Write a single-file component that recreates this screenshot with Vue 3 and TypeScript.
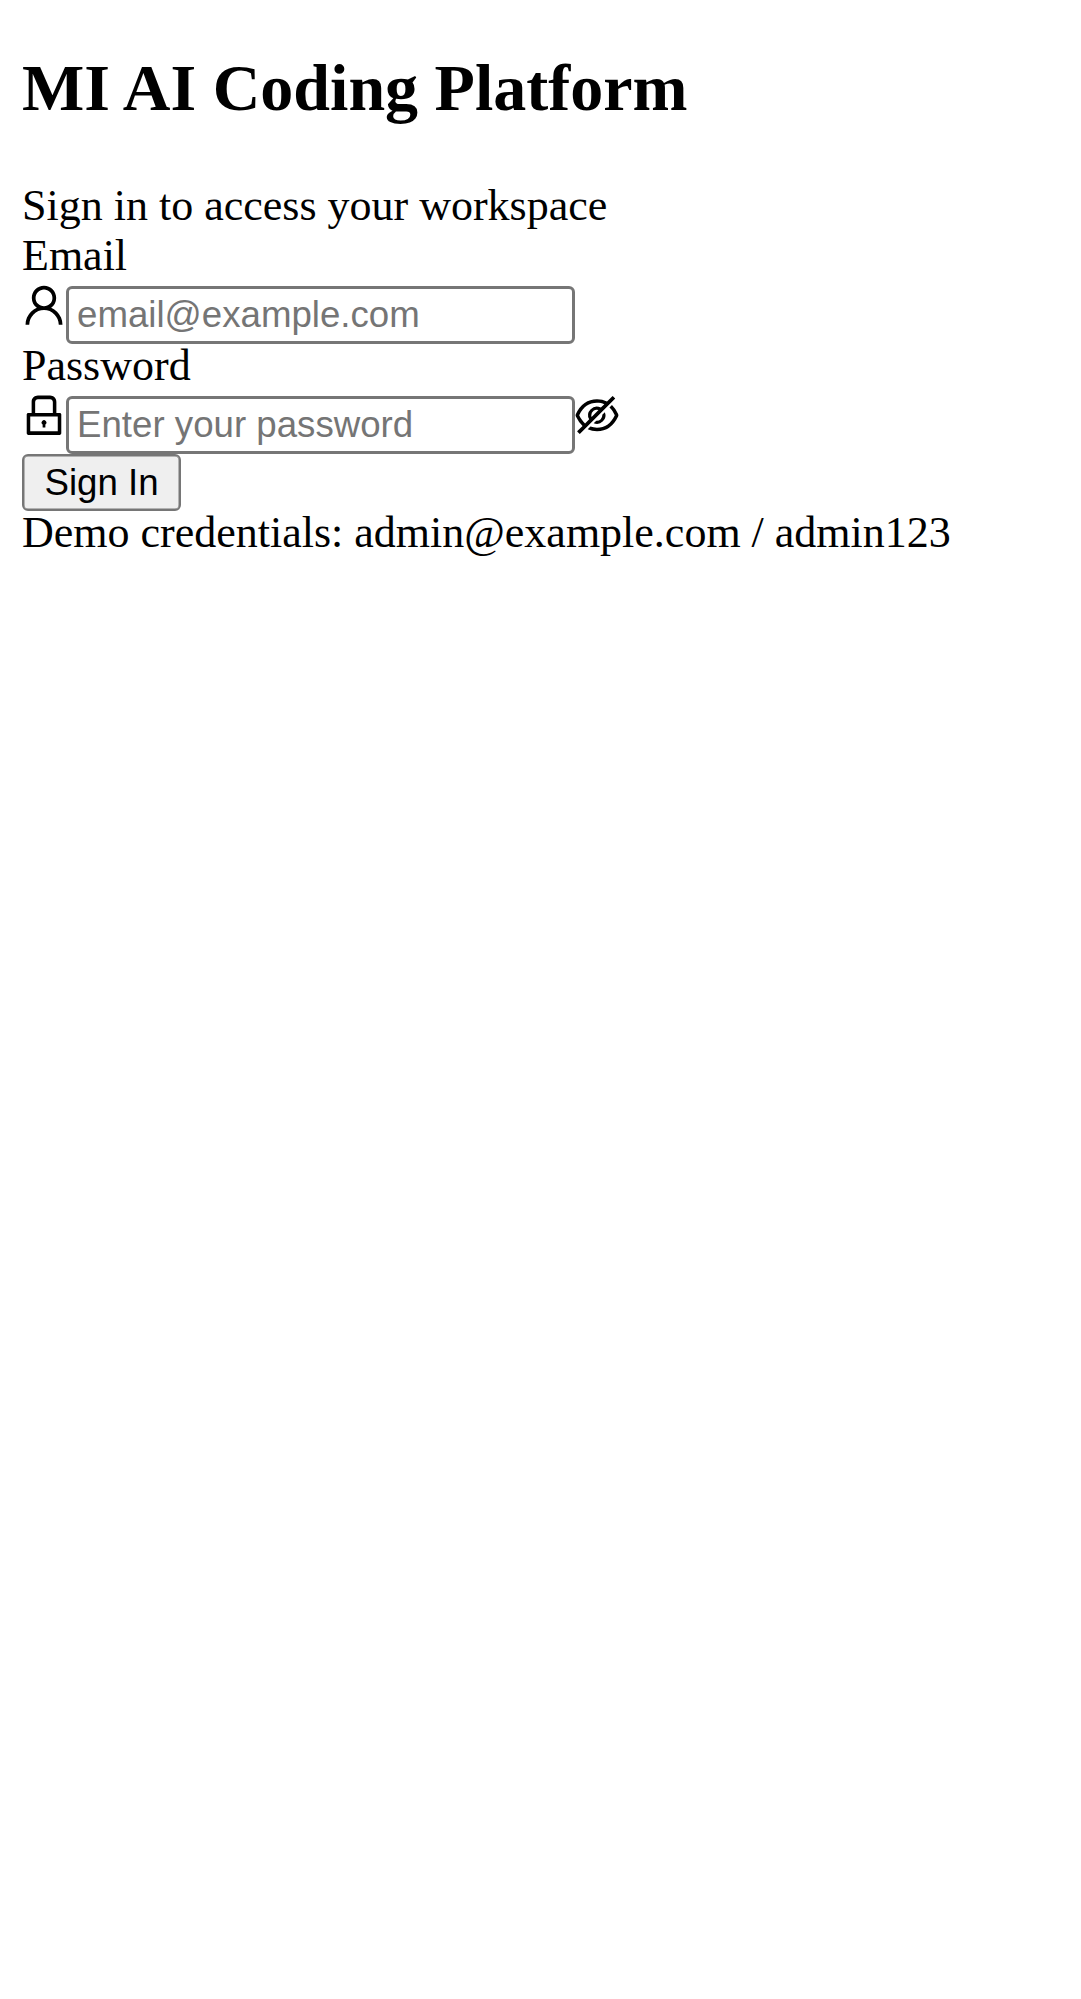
<script setup lang="ts">
import { ref } from 'vue'

const email = ref<string>('')
const password = ref<string>('')
const visible = ref<boolean>(false)
</script>

<template>
  <main class="login">
    <h1 class="title">MI AI Coding Platform</h1>
    <div class="intro">Sign in to access your workspace</div>
    <form class="form" @submit.prevent>
      <label class="label" for="email">Email</label>
      <div class="field">
        <svg class="icon" viewBox="64 64 896 896" aria-hidden="true">
          <path d="M858.5 763.6a374 374 0 00-80.6-119.5 375.63 375.63 0 00-119.5-80.6c-.4-.2-.8-.3-1.2-.5C719.5 518 760 444.7 760 362c0-137-111-248-248-248S264 225 264 362c0 82.7 40.5 156 102.8 201.1-.4.2-.8.3-1.2.5-44.8 18.9-85 46-119.5 80.6a375.63 375.63 0 00-80.6 119.5A371.7 371.7 0 00136 901.8a8 8 0 008 8.2h60c4.4 0 7.9-3.5 8-7.8 2-77.2 33-149.5 87.8-204.3 56.7-56.7 132-87.9 212.2-87.9s155.5 31.2 212.2 87.9C779 752.7 810 825 812 902.2c.1 4.4 3.6 7.8 8 7.8h60a8 8 0 008-8.2c-1-47.8-10.9-94.3-29.5-138.2zM512 534c-45.9 0-89.1-17.9-121.6-50.4S340 407.9 340 362c0-45.9 17.9-89.1 50.4-121.6S466.1 190 512 190s89.1 17.9 121.6 50.4S684 316.1 684 362c0 45.9-17.9 89.1-50.4 121.6S557.9 534 512 534z" />
        </svg>
        <input id="email" v-model="email" class="input" type="text" placeholder="email@example.com" />
      </div>
      <label class="label" for="password">Password</label>
      <div class="field">
        <svg class="icon" viewBox="64 64 896 896" aria-hidden="true">
          <path d="M832 464h-68V240c0-70.7-57.3-128-128-128H388c-70.7 0-128 57.3-128 128v224h-68c-17.7 0-32 14.3-32 32v384c0 17.7 14.3 32 32 32h640c17.7 0 32-14.3 32-32V496c0-17.7-14.3-32-32-32zM332 240c0-30.9 25.1-56 56-56h248c30.9 0 56 25.1 56 56v224H332V240zm460 600H232V536h560v304zM484 701v53c0 4.4 3.6 8 8 8h40c4.4 0 8-3.6 8-8v-53a48.01 48.01 0 10-56 0z" />
        </svg>
        <input id="password" v-model="password" class="input" :type="visible ? 'text' : 'password'" placeholder="Enter your password" />
        <svg class="icon" viewBox="64 64 896 896" role="img" @click="visible = !visible">
          <path d="M942.2 486.2Q889.47 375.11 816.7 305l-50.88 50.88C807.31 395.53 843.45 447.4 874.7 512 791.5 684.2 673.4 766 512 766q-72.67 0-133.87-22.38L323 798.75Q408 838 512 838q288.3 0 430.2-300.3a60.29 60.29 0 000-51.5zm-63.57-320.64L836 122.88a8 8 0 00-11.32 0L715.31 232.2Q624.86 186 512 186q-288.3 0-430.2 300.3a60.3 60.3 0 000 51.5q56.69 119.4 136.5 191.41L112.48 835a8 8 0 000 11.31L155.17 889a8 8 0 0011.31 0l712.15-712.12a8 8 0 000-11.32zM149.3 512C232.6 339.8 350.7 258 512 258c54.54 0 104.13 9.36 149.12 28.39l-70.3 70.3a176 176 0 00-238.13 238.13l-83.42 83.42C223.1 637.49 183.3 582.28 149.3 512zm246.7 0a112.11 112.11 0 01146.2-106.69L401.31 546.2A112 112 0 01396 512z" />
          <path d="M508 624c-3.46 0-6.87-.16-10.25-.47l-52.82 52.82a176.09 176.09 0 00227.42-227.42l-52.82 52.82c.31 3.38.47 6.79.47 10.25a111.94 111.94 0 01-112 112z" />
        </svg>
      </div>
      <button class="submit" type="submit">Sign In</button>
    </form>
    <div class="demo">Demo credentials: admin@example.com / admin123</div>
  </main>
</template>

<style>
body {
  background: #fff;
}
</style>

<style scoped>
.login {
  padding: 51px 22px 22px;
  color: #000;
  font-family: "Liberation Serif", "Times New Roman", serif;
  font-size: 44px;
}

.title {
  margin: 0 0 57px;
  font-size: 66px;
  font-weight: bold;
  line-height: 73px;
}

.intro {
  margin-bottom: 4px;
  line-height: 49px;
}

.form {
  display: flex;
  flex-direction: column;
  align-items: flex-start;
}

.label {
  margin-bottom: 6px;
  line-height: 43px;
}

.field {
  display: flex;
  align-items: flex-start;
}

.icon {
  flex: none;
  width: 44px;
  height: 44px;
  fill: currentColor;
  transform: translateY(0.25px);
}

.input {
  box-sizing: border-box;
  width: 509px;
  height: 58px;
  margin: 3px 0 0;
  padding: 5px 8px 6px;
  border: 3px solid #767676;
  border-radius: 6px;
  background: #fff;
  color: #000;
  font-family: "Liberation Sans", Arial, sans-serif;
  font-size: 36.6667px;
  line-height: 41px;
  outline: none;
}

.input::placeholder {
  color: #757575;
  line-height: 41px;
}

.submit {
  box-sizing: border-box;
  width: 159px;
  height: 57px;
  margin: 0;
  padding: 6px 0;
  border: 2px solid #767676;
  border-radius: 6px;
  background: #efefef;
  box-shadow: inset 0 0 0 0.5px #767676;
  color: #000;
  font-family: "Liberation Sans", Arial, sans-serif;
  font-size: 36.6667px;
  line-height: 41px;
}

.demo {
  line-height: 43px;
}
</style>
